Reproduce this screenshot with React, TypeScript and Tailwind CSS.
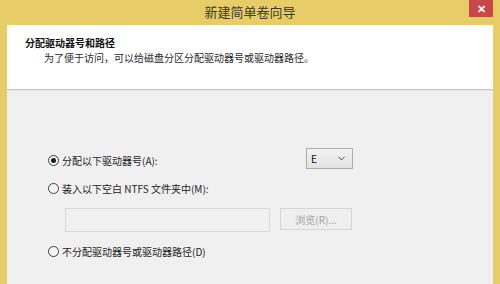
import { ChevronDown } from 'lucide-react';

const font = { fontFamily: '"Noto Sans CJK SC", "Noto Sans", sans-serif' };

function Radio({ checked, label }: { checked?: boolean; label: string }) {
  return (
    <div className="flex items-center h-[15px]">
      <span className="w-[11px] h-[11px] rounded-full border border-[#3c3c3c] bg-[#f7f7f7] flex items-center justify-center">
        {checked && <span className="w-[5px] h-[5px] rounded-full bg-[#1a1a1a]" />}
      </span>
      <span className="ml-[3px] text-[10px] leading-[15px] text-[#1e1e1e]">{label}</span>
    </div>
  );
}

export default function App() {
  return (
    <div className="w-[500px] h-[284px] bg-[#e8cc66] flex flex-col overflow-hidden" style={font}>
      {/* title bar */}
      <div className="relative h-[25px] flex items-center justify-center">
        <span className="text-[13px] leading-[17px] text-[#3d3a2a] -mt-[2px]">新建简单卷向导</span>
        <div className="absolute top-0 right-[7px] w-[24px] h-[17px] bg-[#c9464b] flex items-center justify-center">
          <span className="text-white text-[11px] leading-none font-bold">✕</span>
        </div>
      </div>

      <div className="mx-[7px] flex-1 flex flex-col">
        {/* header */}
        <div className="h-[64px] bg-white pt-[10px] pl-[18px]">
          <div className="text-[10px] leading-[15px] font-bold text-[#111]">分配驱动器号和路径</div>
          <div className="ml-[19px] text-[10px] leading-[15px] text-[#2a2a2a]">
            为了便于访问，可以给磁盘分区分配驱动器号或驱动器路径。
          </div>
        </div>
        <div className="h-[1px] bg-[#c4c4c4]" />
        <div className="h-[1px] bg-[#e4e4e4]" />

        {/* body */}
        <div className="flex-1 bg-[#f0f0f0] pl-[41px] pt-[57px]">
          <div className="flex items-start h-[21px]">
            <div className="mt-[5px] w-[258px]">
              <Radio checked label="分配以下驱动器号(A):" />
            </div>
            <div className="w-[47px] h-[21px] border border-[#adadad] bg-gradient-to-b from-[#f2f2f2] to-[#e3e3e3] flex items-center justify-between pl-[4px] pr-[5px]">
              <span className="text-[10px] leading-none text-[#111]">E</span>
              <ChevronDown size={11} strokeWidth={2} className="text-[#333]" />
            </div>
          </div>

          <div className="mt-[12px]">
            <Radio label="装入以下空白 NTFS 文件夹中(M):" />
          </div>

          <div className="mt-[12px] ml-[17px] flex items-start">
            <div className="w-[205px] h-[24px] border border-[#dadada] bg-[#f0f0f0]" />
            <div className="ml-[10px] w-[72px] h-[22px] border border-[#d6d6d6] bg-[#efefef] flex items-center justify-center text-[10px] text-[#a3a3a3]">
              浏览(R)...
            </div>
          </div>

          <div className="mt-[12px]">
            <Radio label="不分配驱动器号或驱动器路径(D)" />
          </div>
        </div>
      </div>
      <div className="h-0" />
    </div>
  );
}
